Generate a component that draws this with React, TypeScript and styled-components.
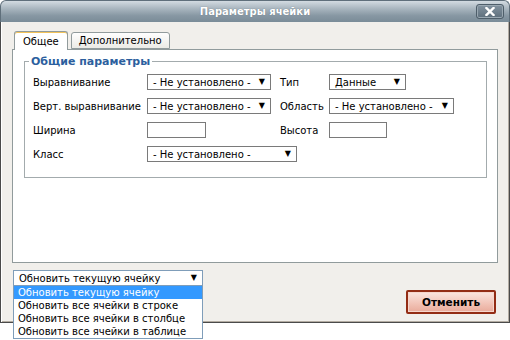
import styled, { createGlobalStyle } from 'styled-components';

const GlobalStyle = createGlobalStyle`
  body {
    margin: 0;
    background: #fff;
    font-family: "DejaVu Sans", Verdana, sans-serif;
    font-size: 10px;
    color: #000;
  }
`;

const Page = styled.div`
  min-height: 340px;
`;

const Window = styled.div`
  width: 510px;
  display: flex;
  flex-direction: column;
`;

const TitleBar = styled.div`
  height: 22px;
  box-sizing: border-box;
  display: grid;
  grid-template-columns: 1fr auto 1fr;
  align-items: center;
  border: 1px solid #5f6f7b;
  border-bottom: none;
  border-radius: 6px 6px 0 0;
  background: linear-gradient(#d3dbe1 0%, #aab7c0 35%, #8797a3 70%, #7a8c98 100%);
`;

const Title = styled.div`
  grid-column: 2;
  color: #fff;
  font-weight: bold;
  font-size: 10px;
  text-shadow: 0 0 1px #5c6b76;
`;

const CloseButton = styled.div`
  grid-column: 3;
  justify-self: end;
  margin-right: 5px;
  width: 28px;
  height: 15px;
  box-sizing: border-box;
  display: flex;
  align-items: center;
  justify-content: center;
  border: 1px solid #4e5e6a;
  border-radius: 3px;
  box-shadow: inset 0 0 0 1px #9aa8b2;
  background: linear-gradient(#8393a0, #5e6f7c);
`;

const Body = styled.div`
  background: #f1efeb;
  border: 1px solid #4a4a4a;
  border-top: none;
  box-shadow: inset 1px 0 0 #fff, inset -1px -1px 0 #b3aca2;
  padding: 9px 11px 0 11px;
  display: flex;
  flex-direction: column;
`;

const TabRow = styled.div`
  display: flex;
  align-items: flex-end;
  gap: 3px;
  padding-left: 2px;
  margin-bottom: -1px;
  position: relative;
  z-index: 1;
`;

const Tab = styled.div<{ $active?: boolean }>`
  box-sizing: border-box;
  height: ${(p) => (p.$active ? '19px' : '17px')};
  margin-bottom: ${(p) => (p.$active ? '0' : '1px')};
  padding: 0 ${(p) => (p.$active ? '8px' : '7px')};
  display: flex;
  align-items: center;
  border: 1px solid #919b9c;
  border-bottom: ${(p) => (p.$active ? 'none' : '1px solid #919b9c')};
  border-radius: 3px 3px 0 0;
  background: ${(p) => (p.$active ? '#fff' : 'linear-gradient(#fefefe, #ecebe6)')};
  box-shadow: ${(p) => (p.$active ? 'inset 0 1px 0 #f3c35a' : 'none')};
`;

const Panel = styled.div`
  height: 214px;
  box-sizing: border-box;
  background: #fff;
  border: 1px solid #919b9c;
  padding: 5px 10px 0 11px;
`;

const Group = styled.fieldset`
  margin: 0;
  padding: 6px 8px 15px 8px;
  border: 1px solid #a3abad;
`;

const Legend = styled.legend`
  margin-left: -4px;
  padding: 0 2px;
  font-size: 11px;
  line-height: 13px;
  font-weight: bold;
  color: #2c5f9e;
`;

const FormGrid = styled.div`
  display: grid;
  grid-template-columns: 114px 133px 49px auto;
  grid-auto-rows: 16px;
  row-gap: 8px;
  align-items: center;
`;

const Label = styled.div`
  white-space: nowrap;
`;

const SelectBox = styled.div<{ $w: number; $focus?: boolean }>`
  width: ${(p) => p.$w}px;
  height: 16px;
  box-sizing: border-box;
  display: flex;
  align-items: center;
  justify-content: space-between;
  padding: 0 5px 0 5px;
  border: 1px solid ${(p) => (p.$focus ? '#7f9db9' : '#7a7a7a')};
  background: #fff;
  white-space: nowrap;
`;

const Arrow = styled.span`
  font-size: 8px;
  line-height: 1;
`;

const TextBox = styled.div<{ $w: number }>`
  width: ${(p) => p.$w}px;
  height: 16px;
  box-sizing: border-box;
  border: 1px solid #7a7a7a;
  background: #fff;
`;

const Footer = styled.div`
  display: flex;
  justify-content: space-between;
  align-items: flex-start;
  padding: 7px 2px 8px 1px;
`;

const DropWrap = styled.div`
  position: relative;
  z-index: 2;
`;

const DropList = styled.div`
  position: absolute;
  top: 15px;
  left: 0;
  width: 190px;
  box-sizing: border-box;
  border: 1px solid #7f9db9;
  background: #fff;
`;

const DropItem = styled.div<{ $selected?: boolean }>`
  height: 13px;
  line-height: 13px;
  padding-left: 4px;
  white-space: nowrap;
  background: ${(p) => (p.$selected ? '#3399ff' : '#fff')};
  color: ${(p) => (p.$selected ? '#fff' : '#000')};
`;

const CancelButton = styled.div`
  margin-top: 20px;
  width: 90px;
  height: 24px;
  box-sizing: border-box;
  display: flex;
  align-items: center;
  justify-content: center;
  border: 2px solid #932c14;
  border-radius: 2px;
  box-shadow: inset 0 0 0 1px #f6d6cc;
  background: linear-gradient(#fbe6df, #f1c2b5 60%, #e9ab9b);
  font-weight: bold;
  font-size: 10.5px;
`;

const updateOptions = [
  'Обновить текущую ячейку',
  'Обновить все ячейки в строке',
  'Обновить все ячейки в столбце',
  'Обновить все ячейки в таблице',
];

export default function App() {
  return (
    <Page>
      <GlobalStyle />
      <Window>
        <TitleBar>
          <Title>Параметры ячейки</Title>
          <CloseButton>
            <svg width="10" height="9" viewBox="0 0 10 9">
              <path d="M1.5 1 L8.5 8 M8.5 1 L1.5 8" stroke="#fff" strokeWidth="2.4" strokeLinecap="square" />
            </svg>
          </CloseButton>
        </TitleBar>
        <Body>
          <TabRow>
            <Tab $active>Общее</Tab>
            <Tab>Дополнительно</Tab>
          </TabRow>
          <Panel>
            <Group>
              <Legend>Общие параметры</Legend>
              <FormGrid>
                <Label>Выравнивание</Label>
                <SelectBox $w={124}>- Не установлено - <Arrow>▼</Arrow></SelectBox>
                <Label>Тип</Label>
                <SelectBox $w={77}>Данные <Arrow>▼</Arrow></SelectBox>

                <Label>Верт. выравнивание</Label>
                <SelectBox $w={124}>- Не установлено - <Arrow>▼</Arrow></SelectBox>
                <Label>Область</Label>
                <SelectBox $w={125}>- Не установлено - <Arrow>▼</Arrow></SelectBox>

                <Label>Ширина</Label>
                <TextBox $w={59} />
                <Label>Высота</Label>
                <TextBox $w={58} />

                <Label>Класс</Label>
                <SelectBox $w={150} style={{ gridColumn: 'span 3' }}>
                  - Не установлено - <Arrow>▼</Arrow>
                </SelectBox>
              </FormGrid>
            </Group>
          </Panel>
          <Footer>
            <DropWrap>
              <SelectBox $w={190} $focus>
                Обновить текущую ячейку <Arrow>▼</Arrow>
              </SelectBox>
              <DropList>
                {updateOptions.map((o, i) => (
                  <DropItem key={o} $selected={i === 0}>{o}</DropItem>
                ))}
              </DropList>
            </DropWrap>
            <CancelButton>Отменить</CancelButton>
          </Footer>
        </Body>
      </Window>
    </Page>
  );
}
